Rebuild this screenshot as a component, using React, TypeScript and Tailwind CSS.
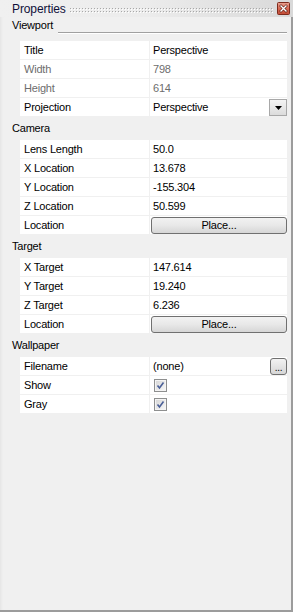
import React from 'react';

type Kind = 'text' | 'select' | 'button' | 'file' | 'check';

interface Prop {
  label: string;
  value?: string;
  kind?: Kind;
  disabled?: boolean;
}

interface Group {
  name: string;
  rows: Prop[];
}

const groups: Group[] = [
  {
    name: 'Viewport',
    rows: [
      { label: 'Title', value: 'Perspective' },
      { label: 'Width', value: '798', disabled: true },
      { label: 'Height', value: '614', disabled: true },
      { label: 'Projection', value: 'Perspective', kind: 'select' },
    ],
  },
  {
    name: 'Camera',
    rows: [
      { label: 'Lens Length', value: '50.0' },
      { label: 'X Location', value: '13.678' },
      { label: 'Y Location', value: '-155.304' },
      { label: 'Z Location', value: '50.599' },
      { label: 'Location', value: 'Place...', kind: 'button' },
    ],
  },
  {
    name: 'Target',
    rows: [
      { label: 'X Target', value: '147.614' },
      { label: 'Y Target', value: '19.240' },
      { label: 'Z Target', value: '6.236' },
      { label: 'Location', value: 'Place...', kind: 'button' },
    ],
  },
  {
    name: 'Wallpaper',
    rows: [
      { label: 'Filename', value: '(none)', kind: 'file' },
      { label: 'Show', kind: 'check' },
      { label: 'Gray', kind: 'check' },
    ],
  },
];

function Grip() {
  return (
    <svg className="flex-1 h-[17px] mx-[4px]" preserveAspectRatio="none">
      <defs>
        <pattern id="grip" width="3" height="17" patternUnits="userSpaceOnUse">
          <rect x="0" y="8" width="1" height="1" fill="#a8a8a8" />
          <rect x="1" y="9" width="1" height="1" fill="#ffffff" />
          <rect x="0" y="11" width="1" height="1" fill="#a8a8a8" />
          <rect x="1" y="12" width="1" height="1" fill="#ffffff" />
        </pattern>
      </defs>
      <rect width="100%" height="17" fill="url(#grip)" />
    </svg>
  );
}

function CloseButton() {
  return (
    <svg width="13" height="13" viewBox="0 0 13 13" className="shrink-0">
      <defs>
        <linearGradient id="closeBg" x1="0" y1="0" x2="0" y2="1">
          <stop offset="0" stopColor="#e9a494" />
          <stop offset="0.5" stopColor="#d86a55" />
          <stop offset="1" stopColor="#c04a34" />
        </linearGradient>
      </defs>
      <rect x="0.5" y="0.5" width="12" height="12" rx="1" fill="url(#closeBg)" stroke="#7d2a1c" />
      <path d="M4 4 L9 9 M9 4 L4 9" stroke="#5a1a10" strokeWidth="2.6" strokeLinecap="square" />
      <path d="M4 4 L9 9 M9 4 L4 9" stroke="#ffffff" strokeWidth="1.4" strokeLinecap="square" />
    </svg>
  );
}

function CheckBox() {
  return (
    <svg width="13" height="13" viewBox="0 0 13 13" className="ml-[1px]">
      <defs>
        <linearGradient id="chkBg" x1="0" y1="0" x2="1" y2="1">
          <stop offset="0" stopColor="#d8d8d8" />
          <stop offset="1" stopColor="#f6f6f6" />
        </linearGradient>
      </defs>
      <rect x="0.5" y="0.5" width="12" height="12" fill="#f4f4f4" stroke="#8e8f8f" />
      <rect x="2" y="2" width="9" height="9" fill="url(#chkBg)" />
      <path d="M3.5 6.5 L5.5 9 L9.5 3.5" fill="none" stroke="#4a5f97" strokeWidth="1.6" />
    </svg>
  );
}

function ValueCell({ row }: { row: Prop }) {
  const tone = row.disabled ? 'text-[#6d6d6d]' : 'text-black';
  if (row.kind === 'button') {
    return (
      <div className="flex-1 flex items-center pl-[1px]">
        <div className="w-full h-[17px] flex items-center justify-center rounded-[3px] border border-[#707070] bg-gradient-to-b from-[#f2f2f2] via-[#e8e8e8] to-[#d6d6d6] text-black">
          {row.value}
        </div>
      </div>
    );
  }
  if (row.kind === 'check') {
    return (
      <div className="flex-1 flex items-center pl-[3px]">
        <CheckBox />
      </div>
    );
  }
  return (
    <div className="flex-1 flex items-center justify-between pl-[3px]">
      <span className={tone}>{row.value}</span>
      {row.kind === 'select' && (
        <div className="w-[18px] h-[17px] mt-[1px] flex items-center justify-center border border-[#a8a8a8] bg-gradient-to-b from-[#f4f4f4] to-[#dcdcdc]">
          <svg width="7" height="4" viewBox="0 0 7 4">
            <path d="M0 0 H7 L3.5 4 Z" fill="#000" />
          </svg>
        </div>
      )}
      {row.kind === 'file' && (
        <div className="w-[17px] h-[17px] mb-[-1px] flex items-end justify-center rounded-[3px] border border-[#707070] bg-gradient-to-b from-[#f2f2f2] to-[#d6d6d6] text-[10px] leading-[12px] text-black">
          ...
        </div>
      )}
    </div>
  );
}

function GroupHeader({ name, first }: { name: string; first: boolean }) {
  if (first) {
    return (
      <div className="flex items-start h-[24px] pl-[12px] pt-[2px]">
        <span className="leading-[13px]">{name}</span>
        <div className="flex-1 mt-[13px] ml-[5px] mr-[4px] border-t border-[#a0a0a0] border-b border-b-white" />
      </div>
    );
  }
  return <div className="flex items-center h-[23px] pl-[12px]">{name}</div>;
}

export default function App() {
  return (
    <div
      className="w-[293px] h-[612px] flex flex-col bg-[#f0f0f0] text-[11px] tracking-[-0.2px] text-black"
      style={{ fontFamily: '"Liberation Sans", Arial, sans-serif' }}
    >
      <div className="h-[17px] flex items-center pl-[12px] pr-[3px] bg-gradient-to-r from-[#f0f0f0] via-[#ececec] to-[#d9d9d9]">
        <span className="text-[12px] tracking-[-0.1px] text-[#10103a]">Properties</span>
        <Grip />
        <CloseButton />
      </div>
      <div className="flex-1 flex flex-col border-r-2 border-b-2 border-[#9c9c9c] shadow-[inset_3px_0_3px_-2px_rgba(0,0,0,0.06)]">
        {groups.map((g, gi) => (
          <div key={g.name} className="flex flex-col">
            <GroupHeader name={g.name} first={gi === 0} />
            <div className="ml-[20px] mr-[4px] flex flex-col">
              {g.rows.map((r) => (
                <div key={g.name + r.label} className="h-[19px] flex bg-white border-b border-[#f0f0f0]">
                  <div
                    className={`w-[130px] flex items-center pl-[4px] border-r border-[#f0f0f0] ${
                      r.disabled ? 'text-[#6d6d6d]' : 'text-black'
                    }`}
                  >
                    {r.label}
                  </div>
                  <ValueCell row={r} />
                </div>
              ))}
            </div>
          </div>
        ))}
      </div>
    </div>
  );
}
